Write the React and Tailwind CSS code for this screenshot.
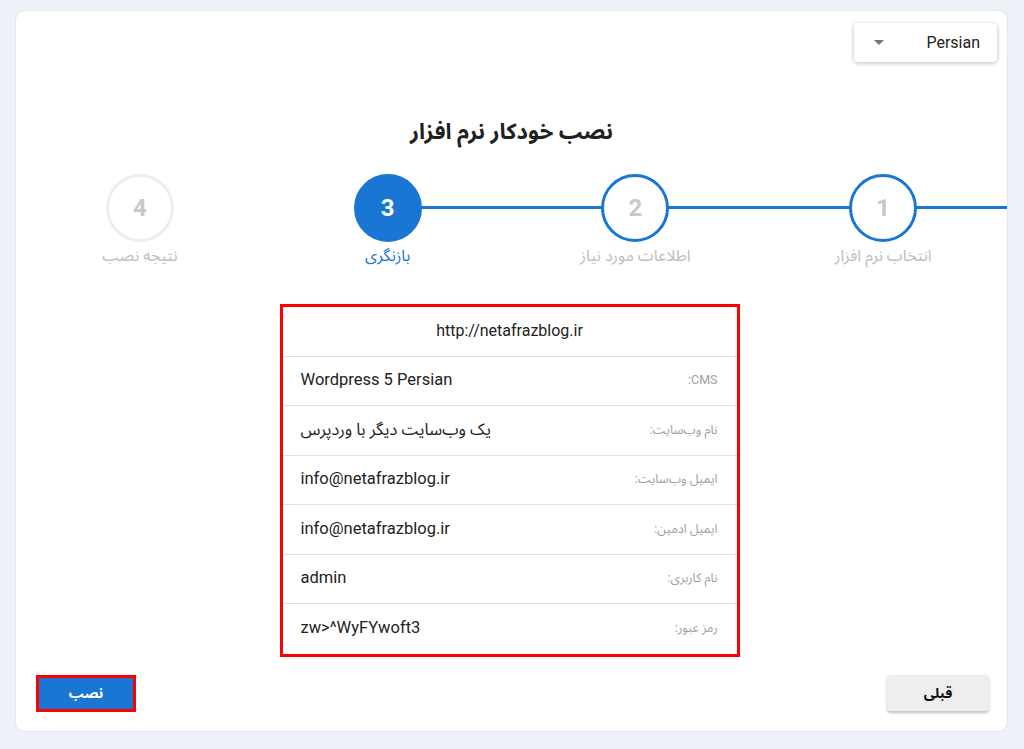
import React from "react";

const FONT = { fontFamily: 'Roboto, "Noto Sans Arabic", "DejaVu Sans", sans-serif' };

const steps = [
  { n: "1", label: "انتخاب نرم افزار", state: "done" },
  { n: "2", label: "اطلاعات مورد نیاز", state: "done" },
  { n: "3", label: "بازنگری", state: "active" },
  { n: "4", label: "نتیجه نصب", state: "todo" },
];

const rows = [
  { label: "CMS:", value: "Wordpress 5 Persian" },
  { label: "نام وب‌سایت:", value: "یک وب‌سایت دیگر با وردپرس" },
  { label: "ایمیل وب‌سایت:", value: "info@netafrazblog.ir" },
  { label: "ایمیل ادمین:", value: "info@netafrazblog.ir" },
  { label: "نام کاربری:", value: "admin" },
  { label: "رمز عبور:", value: "zw>^WyFYwoft3" },
];

function Step({ step, idx }) {
  const rightLine = idx <= 2;
  const leftLine = idx <= 1;
  let circle;
  if (step.state === "active") {
    circle = "bg-[#1976d2] border-[#1976d2] text-white";
  } else if (step.state === "done") {
    circle = "bg-white border-[#1976d2] text-[#c8c8c8]";
  } else {
    circle = "bg-white border-[#eeeeee] text-[#c8c8c8]";
  }
  return (
    <div className="flex flex-col items-center">
      <div className="relative w-full h-[68px] flex justify-center">
        {rightLine && <div className="absolute top-[32px] right-0 w-1/2 h-[3px] bg-[#1976d2]" />}
        {leftLine && <div className="absolute top-[32px] left-0 w-1/2 h-[3px] bg-[#1976d2]" />}
        <div
          className={`relative z-10 w-[68px] h-[68px] rounded-full border-[3px] flex items-center justify-center text-[24px] font-bold ${circle}`}
        >
          {step.n}
        </div>
      </div>
      <div
        className={`mt-[3px] text-[16px] leading-[22px] ${
          step.state === "active" ? "text-[#1976d2]" : "text-[#bdbdbd]"
        }`}
      >
        {step.label}
      </div>
    </div>
  );
}

export default function App() {
  return (
    <div className="min-h-screen w-full bg-[#eef1f8] pt-[10px] pl-[15px]" style={FONT}>
      <div
        dir="rtl"
        className="w-[993px] h-[722px] bg-white rounded-[10px] border border-[#e3e6ec] flex flex-col"
      >
        <div className="flex justify-start pt-[12px] pr-[10px]">
          <div
            dir="ltr"
            className="w-[143px] h-[39px] bg-white rounded-[4px] shadow-[0_1px_4px_rgba(0,0,0,0.28)] flex items-center justify-between pl-[20px] pr-[17px]"
          >
            <svg width="10" height="6" viewBox="0 0 10 6">
              <path d="M0 0 L10 0 L5 5 Z" fill="#757575" />
            </svg>
            <span className="text-[16px] text-[#222]">Persian</span>
          </div>
        </div>

        <h1 className="mt-[55px] text-center text-[22px] leading-[30px] font-bold text-[#212121]">
          نصب خودکار نرم افزار
        </h1>

        <div className="mt-[27px] grid grid-cols-4">
          {steps.map((s, i) => (
            <Step key={s.n} step={s} idx={i} />
          ))}
        </div>

        <div className="mt-[37px] self-center mr-[4px] w-[460px] border-[3px] border-[#ff0000] bg-white">
          <div className="h-[49.5px] flex items-center justify-center border-b border-[#e0e0e0] text-[16px] text-[#222]" dir="ltr">
            http://netafrazblog.ir
          </div>
          {rows.map((r, i) => (
            <div
              key={i}
              className={`h-[49.5px] flex items-center justify-between pr-[19px] pl-[18px] ${
                i < rows.length - 1 ? "border-b border-[#e0e0e0]" : ""
              }`}
            >
              <span className="text-[12.5px] text-[#9e9e9e]">{r.label}</span>
              <span className="text-[16.5px] text-[#222]">{r.value}</span>
            </div>
          ))}
        </div>

        <div className="mt-auto mb-[19px] flex justify-between pr-[18px] pl-[20px]">
          <button className="w-[102px] h-[36px] rounded-[4px] bg-[#eeeeee] shadow-[0_2px_3px_rgba(0,0,0,0.25)] text-[14px] font-bold text-[#111]">
            قبلی
          </button>
          <button className="w-[100px] h-[37px] border-[3px] border-[#ff0000] bg-[#1976d2] text-[14px] font-bold text-white">
            نصب
          </button>
        </div>
      </div>
    </div>
  );
}
